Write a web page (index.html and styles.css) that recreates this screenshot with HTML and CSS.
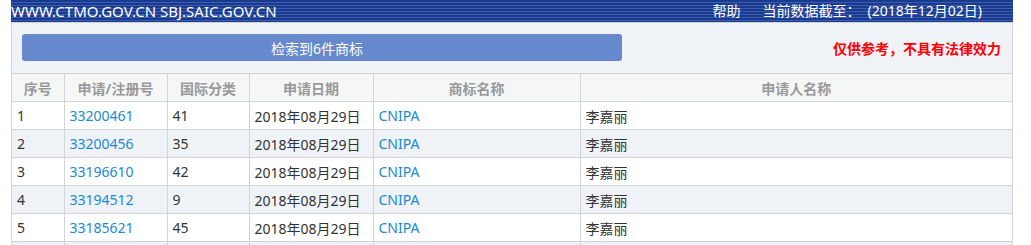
FILE: index.html
```html
<!DOCTYPE html>
<html lang="zh-CN">
<head>
    <meta charset="UTF-8">
    <title>商标检索结果</title>
    <link rel="stylesheet" href="styles.css">
</head>
<body>

<div class="page">
    <div class="topbar">
        <span class="site">WWW.CTMO.GOV.CN SBJ.SAIC.GOV.CN</span>
        <span class="help">帮助</span>
        <span class="date">当前数据截至：<span class="date-val">(2018年12月02日)</span></span>
    </div>

    <div class="panel">
        <div class="toolbar">
            <button class="result-btn">检索到6件商标</button>
            <span class="notice">仅供参考，不具有法律效力</span>
        </div>

        <table class="list">
            <colgroup>
                <col class="c-no">
                <col class="c-reg">
                <col class="c-cls">
                <col class="c-date">
                <col class="c-name">
                <col class="c-app">
            </colgroup>
            <thead>
                <tr>
                    <th>序号</th>
                    <th>申请/注册号</th>
                    <th>国际分类</th>
                    <th>申请日期</th>
                    <th>商标名称</th>
                    <th>申请人名称</th>
                </tr>
            </thead>
            <tbody>
                <tr>
                    <td>1</td>
                    <td><a href="#">33200461</a></td>
                    <td>41</td>
                    <td>2018年08月29日</td>
                    <td><a href="#">CNIPA</a></td>
                    <td>李嘉丽</td>
                </tr>
                <tr>
                    <td>2</td>
                    <td><a href="#">33200456</a></td>
                    <td>35</td>
                    <td>2018年08月29日</td>
                    <td><a href="#">CNIPA</a></td>
                    <td>李嘉丽</td>
                </tr>
                <tr>
                    <td>3</td>
                    <td><a href="#">33196610</a></td>
                    <td>42</td>
                    <td>2018年08月29日</td>
                    <td><a href="#">CNIPA</a></td>
                    <td>李嘉丽</td>
                </tr>
                <tr>
                    <td>4</td>
                    <td><a href="#">33194512</a></td>
                    <td>9</td>
                    <td>2018年08月29日</td>
                    <td><a href="#">CNIPA</a></td>
                    <td>李嘉丽</td>
                </tr>
                <tr>
                    <td>5</td>
                    <td><a href="#">33185621</a></td>
                    <td>45</td>
                    <td>2018年08月29日</td>
                    <td><a href="#">CNIPA</a></td>
                    <td>李嘉丽</td>
                </tr>
                <tr>
                    <td>6</td>
                    <td><a href="#">33185615</a></td>
                    <td>9</td>
                    <td>2018年08月29日</td>
                    <td><a href="#">CNIPA</a></td>
                    <td>李嘉丽</td>
                </tr>
            </tbody>
        </table>
    </div>
</div>

</body>
</html>
```

FILE: styles.css
```css
body {
    margin: 0;
    font-family: "Noto Sans", "Noto Sans CJK SC", sans-serif;
    color: #333;
    background: #fff;
}
.page {
    width: 1002px;
    margin-left: 11px;
}
.topbar {
    display: flex;
    align-items: center;
    height: 22px;
    background: repeating-linear-gradient(to bottom, #1a3a8f 0, #1a3a8f 2px, #3d5eae 2px, #3d5eae 3px);
    color: #fff;
    font-size: 15px;
    line-height: 22px;
    white-space: nowrap;
}
.site {
    flex: 1;
}
.help,
.date {
    font-size: 14px;
}
.help {
    margin-right: 22px;
}
.date {
    margin-right: 31px;
}
.date-val {
    margin-left: 7px;
}
.panel {
    background: #eff3f8;
    border: 1px solid #d4d4d4;
    border-bottom: none;
}
.toolbar {
    display: flex;
    align-items: center;
    justify-content: space-between;
    padding: 11px 11px 12px 10px;
}
.result-btn {
    width: 600px;
    height: 27px;
    padding: 0 10px 0 0;
    border: none;
    border-radius: 3px;
    background: #6589cc;
    color: #fff;
    font-family: inherit;
    font-size: 14px;
}
.notice {
    color: #f00;
    font-size: 14px;
    font-weight: bold;
}
.list {
    width: 100%;
    border-collapse: collapse;
    font-size: 14px;
}
.c-no { width: 52px; }
.c-reg { width: 103px; }
.c-cls { width: 82px; }
.c-date { width: 124px; }
.c-name { width: 207px; }
.list th,
.list td {
    height: 27px;
    padding: 0 5px;
    border: 1px solid #d4d4d4;
    text-align: left;
    white-space: nowrap;
}
.list tr > :first-child { border-left: none; }
.list tr > :last-child { border-right: none; }
.list th {
    background: #f5f6f6;
    color: #999;
    font-size: 14px;
    font-weight: bold;
    text-align: center;
}
.list tbody tr:nth-child(odd) td {
    background: #fff;
}
.list tbody tr:nth-child(even) td {
    background: #eff3f8;
}
.list a {
    color: #1a8ad4;
    text-decoration: none;
}
```
